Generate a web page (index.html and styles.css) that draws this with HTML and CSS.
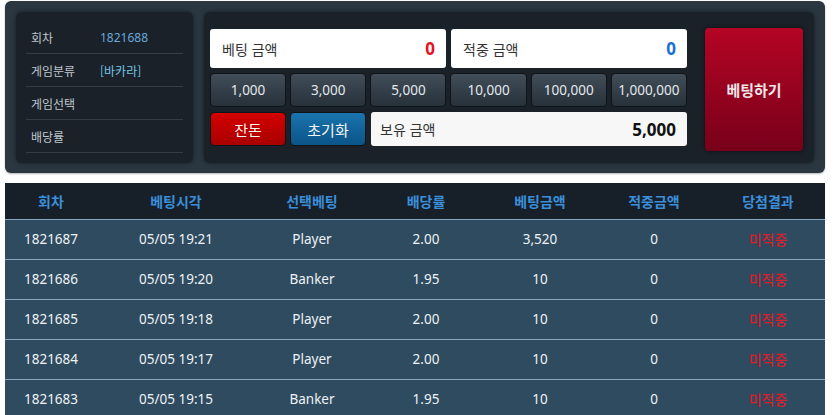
FILE: index.html
```html
<!DOCTYPE html>
<html lang="ko">
<head>
<meta charset="utf-8">
<link rel="stylesheet" href="styles.css">
</head>
<body>
<div class="page">
  <section class="panel">
    <div class="info">
      <div class="info-row"><span class="info-label">회차</span><span class="info-value round">1821688</span></div>
      <div class="info-row"><span class="info-label">게임분류</span><span class="info-value game">[바카라]</span></div>
      <div class="info-row"><span class="info-label">게임선택</span><span class="info-value"></span></div>
      <div class="info-row"><span class="info-label">배당률</span><span class="info-value"></span></div>
    </div>
    <div class="bet">
      <div class="controls">
        <div class="fields">
          <div class="field"><span class="field-label">베팅 금액</span><span class="field-value red">0</span></div>
          <div class="field"><span class="field-label">적중 금액</span><span class="field-value blue">0</span></div>
        </div>
        <div class="chips">
          <button class="chip">1,000</button>
          <button class="chip">3,000</button>
          <button class="chip">5,000</button>
          <button class="chip">10,000</button>
          <button class="chip">100,000</button>
          <button class="chip">1,000,000</button>
        </div>
        <div class="actions">
          <button class="act act-red">잔돈</button>
          <button class="act act-blue">초기화</button>
          <div class="field balance"><span class="field-label">보유 금액</span><span class="field-value dark">5,000</span></div>
        </div>
      </div>
      <button class="bet-btn">베팅하기</button>
    </div>
  </section>

  <table class="history">
    <colgroup>
      <col class="c1"><col class="c2"><col class="c3"><col class="c4"><col class="c5"><col class="c6"><col class="c7">
    </colgroup>
    <thead>
      <tr><th>회차</th><th>베팅시각</th><th>선택베팅</th><th>배당률</th><th>베팅금액</th><th>적중금액</th><th>당첨결과</th></tr>
    </thead>
    <tbody>
      <tr><td>1821687</td><td>05/05 19:21</td><td>Player</td><td>2.00</td><td>3,520</td><td>0</td><td class="miss">미적중</td></tr>
      <tr><td>1821686</td><td>05/05 19:20</td><td>Banker</td><td>1.95</td><td>10</td><td>0</td><td class="miss">미적중</td></tr>
      <tr><td>1821685</td><td>05/05 19:18</td><td>Player</td><td>2.00</td><td>10</td><td>0</td><td class="miss">미적중</td></tr>
      <tr><td>1821684</td><td>05/05 19:17</td><td>Player</td><td>2.00</td><td>10</td><td>0</td><td class="miss">미적중</td></tr>
      <tr><td>1821683</td><td>05/05 19:15</td><td>Banker</td><td>1.95</td><td>10</td><td>0</td><td class="miss">미적중</td></tr>
    </tbody>
  </table>
</div>
</body>
</html>
```
FILE: styles.css
```css
* { box-sizing: border-box; }
html, body { margin: 0; padding: 0; background: #ffffff; }
body {
  font-family: "Noto Sans", "Noto Sans CJK KR", sans-serif;
  font-size: 13px;
  color: #222;
}
.page {
  padding: 1px 10px 0 5px;
  display: flex;
  flex-direction: column;
  gap: 10px;
  width: 835px;
}
.panel {
  width: 820px;
  height: 172px;
  background: #2a3741;
  border-radius: 6px;
  padding: 11px 11px 10px 11px;
  display: flex;
  gap: 11px;
  box-shadow: 0 1px 2px rgba(0,0,0,0.3);
}
.info {
  width: 177px;
  background: #1b2128;
  border-radius: 6px;
  padding: 9px 10px 0 10px;
  box-shadow: 0 0 4px rgba(0,0,0,0.5);
}
.info-row {
  height: 33px;
  border-bottom: 1px solid #323d46;
  display: flex;
  align-items: center;
  padding-left: 5px;
  font-family: "Noto Sans CJK KR", sans-serif;
  font-size: 12px;
}
.info-label { color: #bfc6cc; width: 69px; }
.info-value { font-size: 12px; }
.round { color: #68a9dc; font-family: "Noto Sans", "Noto Sans CJK KR", sans-serif; }
.game { color: #74c6e6; }
.bet {
  flex: 1;
  background: #1b2128;
  border-radius: 6px;
  padding: 17px 11px 12px 6px;
  display: flex;
  gap: 18px;
  box-shadow: 0 0 4px rgba(0,0,0,0.5);
}
.controls {
  width: 477px;
  display: flex;
  flex-direction: column;
  gap: 5px;
}
.fields {
  display: flex;
  gap: 5px;
  height: 39px;
}
.field {
  flex: 1;
  background: #ffffff;
  border-radius: 3px;
  display: flex;
  align-items: center;
  justify-content: space-between;
  padding: 0 11px 0 12px;
}
.field-label {
  font-family: "Noto Sans CJK KR", sans-serif;
  font-size: 14px;
  color: #333;
}
.field-value {
  font-weight: 700;
  font-size: 17px;
}
.red { color: #e3131f; }
.blue { color: #1a6fd6; }
.dark { color: #111; }
.chips {
  display: grid;
  grid-template-columns: repeat(6, 1fr);
  gap: 4px;
  height: 34px;
}
button {
  font: inherit;
  margin: 0;
  cursor: pointer;
}
.chip {
  background: linear-gradient(#414d58, #27313a);
  border: 1px solid #0f1418;
  border-radius: 4px;
  color: #e3e8ec;
  font-size: 13.5px;
  padding: 0;
}
.actions {
  display: flex;
  gap: 4px;
  height: 34px;
}
.act {
  width: 76px;
  border: 1px solid #0f1418;
  border-radius: 4px;
  color: #f5f5f5;
  font-family: "Noto Sans CJK KR", sans-serif;
  font-size: 15px;
  padding: 0;
}
.act-red { background: linear-gradient(#d40000, #a80000); }
.act-blue { background: linear-gradient(#1a73ad, #0b5588); }
.balance {
  margin-left: 1px;
  background: #f7f7f7;
  padding: 0 11px 0 9px;
}
.bet-btn {
  width: 98px;
  height: 123px;
  margin-top: -1px;
  border: none;
  border-radius: 4px;
  background: linear-gradient(#b40524, #78001a);
  color: #f3e6e8;
  font-family: "Noto Sans CJK KR", sans-serif;
  font-weight: 700;
  font-size: 15px;
  box-shadow: 0 0 4px rgba(0,0,0,0.6);
}
.history {
  width: 820px;
  border-collapse: collapse;
  table-layout: fixed;
}
.c1 { width: 92px; }
.c2 { width: 158px; }
.c3, .c4, .c5, .c6, .c7 { width: 114px; }
.history th {
  background: #172029;
  color: #3b8fd9;
  font-family: "Noto Sans CJK KR", sans-serif;
  font-weight: 700;
  font-size: 14px;
  height: 36px;
  padding: 0;
  text-align: center;
}
.history td {
  background: #2f4b60;
  color: #eef2f5;
  height: 40px;
  padding: 0;
  text-align: center;
  font-size: 13.5px;
  border-bottom: 1px solid #86a6bd;
}
.history tbody tr:first-child td { border-top: 1px solid #86a6bd; }
.history td.miss {
  color: #d5212c;
  font-family: "Noto Sans CJK KR", sans-serif;
  font-size: 14px;
  font-weight: 500;
}
```
